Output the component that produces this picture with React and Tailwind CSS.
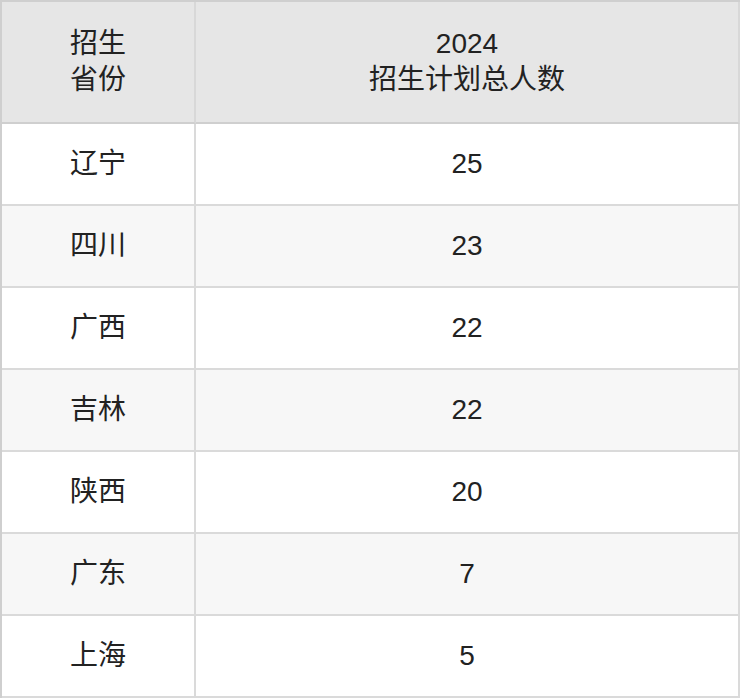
const rows = [
  ['辽宁', '25'],
  ['四川', '23'],
  ['广西', '22'],
  ['吉林', '22'],
  ['陕西', '20'],
  ['广东', '7'],
  ['上海', '5'],
]

export default function App() {
  return (
    <div
      className="w-[740px] bg-white text-[#222] text-[28px] leading-[36px]"
      style={{ fontFamily: '"Liberation Sans", "Noto Sans CJK SC", sans-serif' }}
    >
      <div className="border-l-2 border-t-2 border-[#cfcfcf]">
        {/* 表头 */}
        <div className="flex bg-[#e6e6e6]">
          <div className="w-[194px] h-[122px] flex items-center justify-center text-center border-r-2 border-b-2 border-r-[#d8d8d8] border-b-[#cfcfcf]">
            <div>
              招生
              <br />
              省份
            </div>
          </div>
          <div className="flex-1 h-[122px] flex items-center justify-center text-center border-r-2 border-b-2 border-r-[#d8d8d8] border-b-[#cfcfcf]">
            <div>
              2024
              <br />
              招生计划总人数
            </div>
          </div>
        </div>

        {rows.map(([prov, num], i) => (
          <div key={prov} className={i % 2 === 0 ? 'flex bg-white' : 'flex bg-[#f7f7f7]'}>
            <div className="w-[194px] h-[82px] flex items-center justify-center border-r-2 border-b-2 border-[#dadada]">
              {prov}
            </div>
            <div className="flex-1 h-[82px] flex items-center justify-center border-r-2 border-b-2 border-[#dadada]">
              {num}
            </div>
          </div>
        ))}
      </div>
    </div>
  )
}
